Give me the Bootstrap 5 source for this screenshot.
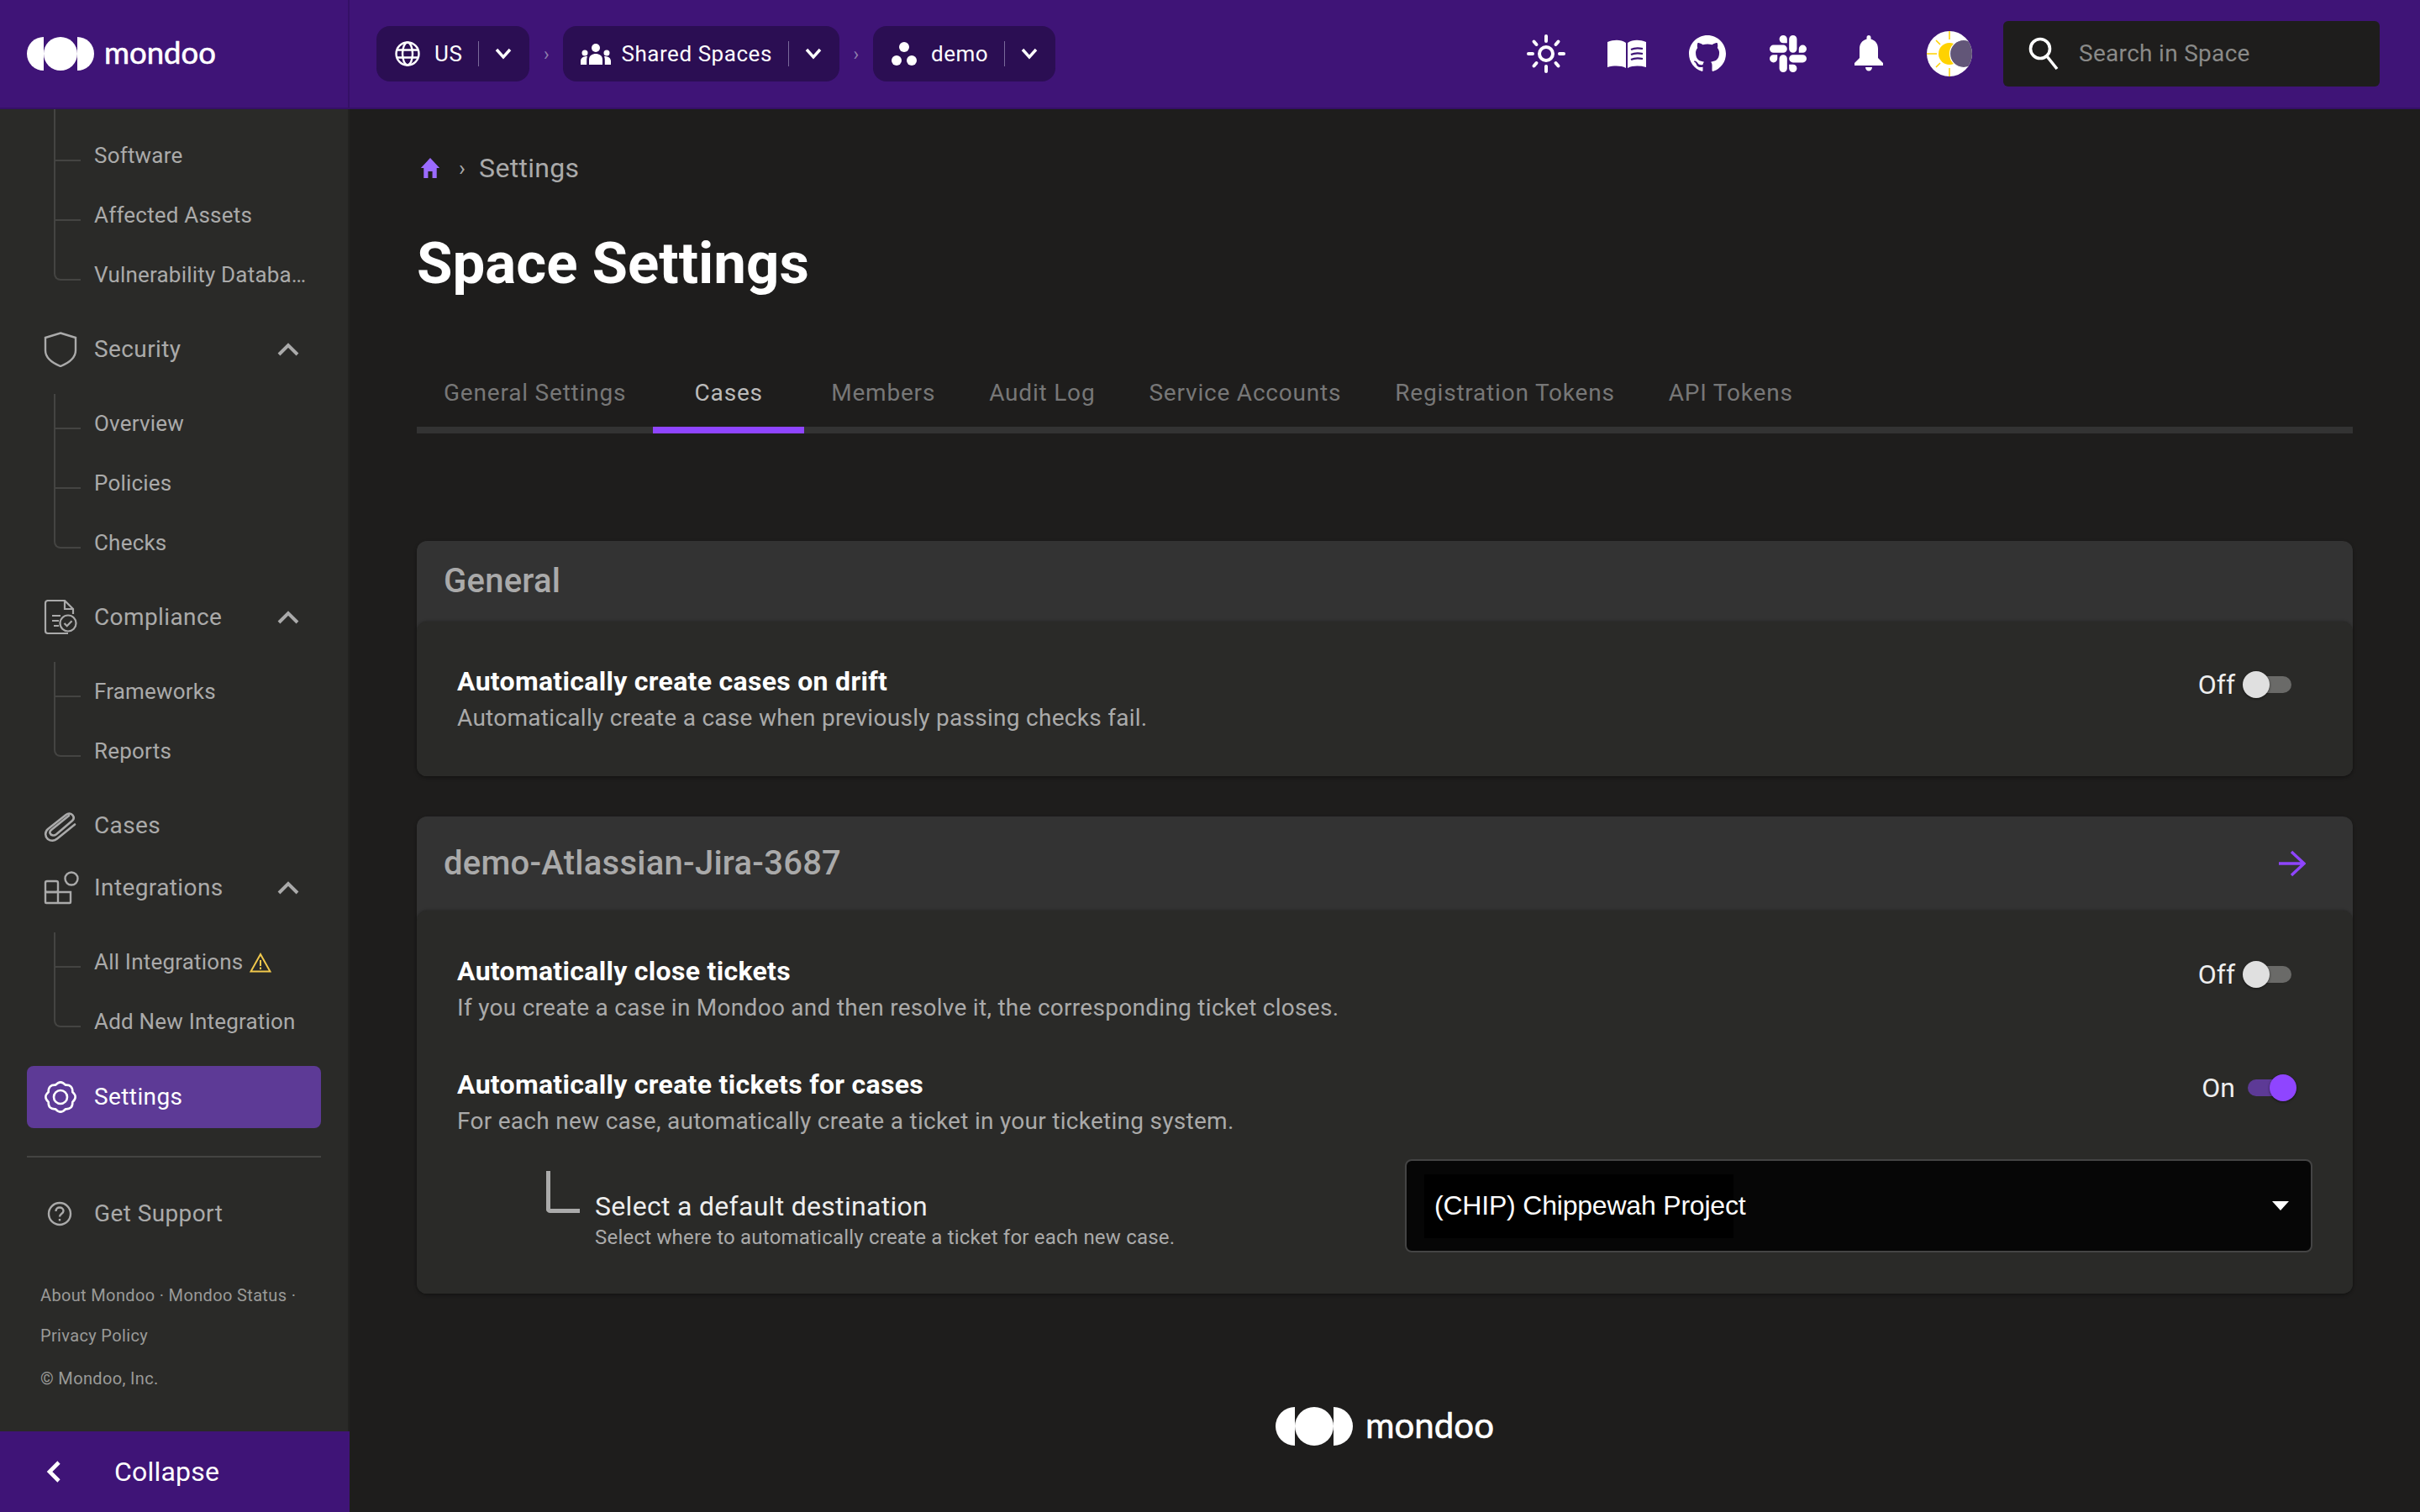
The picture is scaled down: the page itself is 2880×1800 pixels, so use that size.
<!DOCTYPE html>
<html lang="en">
<head>
  <meta charset="UTF-8" />
  <title>Space Settings</title>
  <link href="https://cdn.jsdelivr.net/npm/bootstrap@5.3.0/dist/css/bootstrap.min.css" rel="stylesheet" />
  <style>
    html, body { height: 100%; }
    body {
      background: #1e1d1c;
      color: #fff;
      font-family: Roboto, "Liberation Sans", sans-serif;
      overflow: hidden;
    }
    svg { display: block; flex: none; }

    /* top bar */
    .topbar { height: 130px; background: #3f1477; border-bottom: 2px solid #351066; }
    .logo-cell { width: 416px; border-right: 2px solid #351066; padding-left: 32px; }
    .wordmark { font-family: Lato, Roboto, sans-serif; font-weight: 400; line-height: 1; -webkit-text-stroke: .6px #fff; }
    .logo-cell .wordmark { font-size: 36.5px; margin-left: 12px; margin-top: -4px; }
    .crumbs { padding-left: 32px; }
    .pill { height: 66px; background: #2b0e53; border-radius: 16px; padding: 0 21px; font-size: 26px; letter-spacing: .55px; }
    .pill-sep { width: 1px; height: 30px; background: #7a6a9a; margin: 0 19px; }
    .pill-label-tight { margin-left: 12px; }
    .crumb-arrow { width: 40px; text-align: center; color: #8f7fae; font-size: 22px; }
    .tool-cell { width: 96px; }
    .search-box { width: 448px; height: 78px; margin: 0 48px 0 16px; background: #1e1d1c; border-radius: 6px; padding-left: 30px; color: #8a8a88; font-size: 28px; letter-spacing: .3px; }
    .search-text { margin-left: 24px; }

    /* sidebar */
    .sidebar { width: 416px; height: 1670px; overflow: hidden; }
    .side-scroll { background: #2a2a28; border-right: 2px solid #222220; padding: 20px 32px 0 32px; overflow: hidden; }
    .side-row { height: 74px; color: #aaa; font-size: 28px; letter-spacing: .4px; margin-left: 20px; }
    .ico-slot { width: 60px; flex: none; }
    .side-row .chev { margin-left: auto; margin-right: 26px; }
    .sub-list { list-style: none; margin: 16px 0 16px; padding: 0; }
    .sub-list li { height: 71px; display: flex; align-items: center; padding-left: 80px; color: #aaa; font-size: 26px; letter-spacing: .2px; white-space: nowrap; position: relative; }
    .sub-list li::before { content: ""; position: absolute; left: 32px; top: 0; height: 100%; width: 2px; background: #444442; }
    .sub-list li::after { content: ""; position: absolute; left: 32px; top: 40px; width: 32px; height: 2px; background: #444442; }
    .sub-list li:last-child::before { height: 33px; }
    .sub-list li:last-child::after { top: 32px; height: 10px; background: none; border-left: 2px solid #444442; border-bottom: 2px solid #444442; border-bottom-left-radius: 8px; }
    .sub-list.first { margin-top: 0; }
    .sub-list.first li:first-child::before { top: -20px; height: calc(100% + 20px); }
    .side-active { height: 74px; margin-top: 17px; background: #5d3a96; color: #fff; border-radius: 8px; padding-left: 20px; font-size: 28px; letter-spacing: .4px; }
    .side-rule { height: 2px; background: #444442; margin: 33px 0 39px; }
    .support-row { height: 56px; }
    .side-foot { padding-left: 16px; color: #9a9a98; font-size: 20px; letter-spacing: .35px; white-space: nowrap; }
    .foot-about { margin-top: 54px; }
    .foot-privacy { margin-top: 18px; }
    .foot-copy { margin-top: 21px; }
    .collapse-bar { height: 96px; background: #3f1477; padding-left: 55px; color: #fff; font-size: 32px; letter-spacing: .2px; }
    .collapse-text { margin-left: 63px; }

    /* main */
    .main-area { padding: 0 80px; min-width: 0; }
    .crumb-line { height: 40px; margin-top: 50px; color: #aaa; font-size: 32px; letter-spacing: .3px; }
    .home-ico { margin-left: 4px; }
    .crumb-sep { font-size: 26px; margin: 0 16px 0 22px; }
    .page-title { font-size: 69px; font-weight: 700; margin: 59px 0 0; line-height: 1; }
    .tabs-bar { margin-top: 82px; border-bottom: 8px solid #333; height: 86px; }
    .tab-item { min-width: 180px; padding: 0 32px 10px; height: 86px; color: #777; font-size: 28px; letter-spacing: .8px; display: flex; align-items: center; justify-content: center; white-space: nowrap; position: relative; }
    .tab-item.on { color: #bbb; }
    .tab-item.on::after { content: ""; position: absolute; left: 0; right: 0; bottom: 0; height: 8px; background: #8f45ff; }

    .set-card { background: #333; border-radius: 12px; margin-bottom: 48px; box-shadow: 0 2px 4px rgba(0,0,0,.3); }
    .card-general { margin-top: 128px; }
    .set-head { color: #aaa; font-size: 40px; font-weight: 500; padding: 0 32px; letter-spacing: .25px; }
    .head-small { height: 96px; }
    .head-large { height: 112px; }
    .head-arrow { margin-right: 24px; }
    .set-body { background: #2a2a28; border-radius: 12px; padding: 0 48px; box-shadow: 0 -1px 3px rgba(0,0,0,.2); }
    .body-general { padding-top: 49px; padding-bottom: 47px; }
    .body-jira { padding-top: 50px; padding-bottom: 49px; }
    .set-row { display: flex; justify-content: space-between; }
    .row-next { margin-top: 47px; }
    .row-title { font-size: 32px; font-weight: 700; line-height: 44px; letter-spacing: .3px; }
    .row-desc { font-size: 28px; line-height: 44px; color: #aaa; letter-spacing: .28px; }

    /* toggles */
    .tog { width: 130px; height: 32px; margin: 10px 22px 0 0; }
    .tog-lab { font-size: 32px; line-height: 32px; color: #eee; width: 60px; text-align: right; }
    .tog-track { position: relative; width: 52px; height: 20px; border-radius: 10px; background: #6a6a68; margin-left: 15px; }
    .tog-track i { position: absolute; top: -6px; left: -6px; width: 32px; height: 32px; border-radius: 50%; background: #e0e0e0; box-shadow: 0 1px 3px rgba(0,0,0,.5); }
    .tog-track.on { background: #5d3a96; }
    .tog-track.on i { left: 26px; background: #8f45ff; }

    .dest-row { margin-top: 23px; }
    .dest-left { padding-left: 106px; }
    .dest-elbow { margin-top: 14px; }
    .dest-copy { margin: 34px 0 0 18px; }
    .dest-title { font-size: 32px; color: #eee; line-height: 44px; letter-spacing: .3px; }
    .dest-sub { font-size: 24px; color: #aaa; line-height: 30px; letter-spacing: .21px; }
    .dest-select { width: 1080px; height: 111px; background: #060606; border: 2px solid #444; border-radius: 8px; padding-left: 21px; font-family: "Liberation Sans", Arial, sans-serif; font-size: 32px; letter-spacing: -.2px; color: #fff; }
    .dest-select span { padding: 13px 0 15px 12px; background: linear-gradient(#000, #000) no-repeat 0 0 / 368px 100%; }
    .caret-down { width: 0; height: 0; border-left: 10px solid transparent; border-right: 10px solid transparent; border-top: 11px solid #fff; margin-left: auto; margin-right: 26px; }
    .foot-logo { margin-top: 135px; }
    .foot-logo .wordmark { font-size: 42px; margin-left: 15px; margin-top: -5px; }
  </style>
</head>
<body>

  <!-- top bar -->
  <div class="topbar d-flex align-items-center">
    <div class="logo-cell d-flex align-items-center h-100">
      <svg width="80" height="40" viewBox="0 0 80 40"><g fill="#fff"><path d="M20 0v40a20 20 0 0 1 0-40z"/><circle cx="40" cy="20" r="20"/><path d="M60 0a20 20 0 0 1 0 40z"/></g></svg>
      <span class="wordmark">mondoo</span>
    </div>
    <div class="crumbs d-flex align-items-center flex-grow-1">
      <div class="pill d-flex align-items-center">
        <svg width="32" height="32" viewBox="0 0 32 32" fill="none" stroke="#fff" stroke-width="2.4"><circle cx="16" cy="16" r="13.5"/><ellipse cx="16" cy="16" rx="6" ry="13.5"/><path d="M3 11.500h26M3 20.500h26"/></svg>
        <span class="ms-3">US</span>
        <span class="pill-sep"></span>
        <svg width="20" height="14" viewBox="0 0 20 14" fill="none" stroke="#fff" stroke-width="3.4"><path d="M2 2l8 9 8-9"/></svg>
      </div>
      <div class="crumb-arrow">›</div>
      <div class="pill d-flex align-items-center">
        <svg width="36" height="26" viewBox="0 0 36 26" fill="#fff"><circle cx="18" cy="6" r="5"/><path d="M10 26v-6c0-5 4-7 8-7s8 2 8 7v6z"/><circle cx="5" cy="12" r="3.5"/><path d="M0 26v-4c0-4 3-6 8-6-.5 1.300-.8 2.800-.8 4.500V26z"/><circle cx="31" cy="12" r="3.5"/><path d="M36 26v-4c0-4-3-6-8-6 .5 1.300.8 2.800.8 4.500V26z"/></svg>
        <span class="pill-label-tight">Shared Spaces</span>
        <span class="pill-sep"></span>
        <svg width="20" height="14" viewBox="0 0 20 14" fill="none" stroke="#fff" stroke-width="3.4"><path d="M2 2l8 9 8-9"/></svg>
      </div>
      <div class="crumb-arrow">›</div>
      <div class="pill d-flex align-items-center">
        <svg width="32" height="30" viewBox="0 0 32 30" fill="#fff"><circle cx="16" cy="7" r="6"/><circle cx="7" cy="23" r="6"/><circle cx="25" cy="23" r="6"/></svg>
        <span class="ms-3">demo</span>
        <span class="pill-sep"></span>
        <svg width="20" height="14" viewBox="0 0 20 14" fill="none" stroke="#fff" stroke-width="3.4"><path d="M2 2l8 9 8-9"/></svg>
      </div>
    </div>
    <div class="d-flex align-items-center">
      <div class="tool-cell d-flex justify-content-center">
        <svg width="46" height="46" viewBox="0 0 46 46" fill="none" stroke="#fff" stroke-width="4" stroke-linecap="round"><circle cx="23" cy="23" r="8"/><path d="M23 2v6M23 38v6M2 23h5M39 23h5M8.500 8.500l3 3.500M37.500 8.500l-3 3.500M8.500 37.500l3-3.500M37.500 37.500l-3-3.500"/></svg>
      </div>
      <div class="tool-cell d-flex justify-content-center">
        <svg width="46" height="34" viewBox="0 0 46 34" fill="#fff"><path d="M0 3c8-3 16-3 22 1v30c-6-3-14-3-22-1z"/><path d="M24 4c6-4 14-4 22-1v30c-8-2-16-2-22 1z"/><path d="M28 12c4-2 9-2 14-1M28 18c4-2 9-2 14-1M28 24c4-2 9-2 14-1" stroke="#3f1477" stroke-width="2.200" fill="none"/></svg>
      </div>
      <div class="tool-cell d-flex justify-content-center">
        <svg width="44" height="44" viewBox="0 0 16 16" fill="#fff"><path d="M8 0C3.580 0 0 3.580 0 8c0 3.540 2.290 6.530 5.470 7.590.4.070.55-.17.55-.38 0-.19-.01-.82-.01-1.490-2.010.37-2.530-.49-2.690-.94-.09-.23-.48-.94-.82-1.130-.28-.15-.68-.52-.01-.53.630-.01 1.080.58 1.230.82.720 1.210 1.870.87 2.330.66.070-.52.280-.87.510-1.070-1.780-.2-3.640-.89-3.640-3.950 0-.87.310-1.590.820-2.150-.08-.2-.36-1.020.08-2.120 0 0 .67-.21 2.200.82.640-.18 1.320-.27 2-.27s1.360.09 2 .27c1.530-1.040 2.200-.82 2.200-.82.440 1.100.16 1.920.08 2.120.51.560.820 1.270.820 2.150 0 3.070-1.870 3.750-3.650 3.950.290.250.540.730.540 1.480 0 1.070-.01 1.930-.01 2.200 0 .21.150.46.550.38A8.010 8.010 0 0 0 16 8c0-4.420-3.580-8-8-8z"/></svg>
      </div>
      <div class="tool-cell d-flex justify-content-center">
        <svg width="44" height="44" viewBox="0 0 24 24" fill="#fff"><path d="M5.042 15.165a2.528 2.528 0 0 1-2.520 2.523A2.528 2.528 0 0 1 0 15.165a2.527 2.527 0 0 1 2.522-2.520h2.520v2.520zM6.313 15.165a2.527 2.527 0 0 1 2.521-2.520 2.527 2.527 0 0 1 2.521 2.520v6.313A2.528 2.528 0 0 1 8.834 24a2.528 2.528 0 0 1-2.521-2.522v-6.313zM8.834 5.042a2.528 2.528 0 0 1-2.521-2.520A2.528 2.528 0 0 1 8.834 0a2.528 2.528 0 0 1 2.521 2.522v2.520H8.834zM8.834 6.313a2.528 2.528 0 0 1 2.521 2.521 2.528 2.528 0 0 1-2.521 2.521H2.522A2.528 2.528 0 0 1 0 8.834a2.528 2.528 0 0 1 2.522-2.521h6.312zM18.956 8.834a2.528 2.528 0 0 1 2.522-2.521A2.528 2.528 0 0 1 24 8.834a2.528 2.528 0 0 1-2.522 2.521h-2.522V8.834zM17.688 8.834a2.528 2.528 0 0 1-2.523 2.521 2.527 2.527 0 0 1-2.520-2.521V2.522A2.527 2.527 0 0 1 15.165 0a2.528 2.528 0 0 1 2.523 2.522v6.312zM15.165 18.956a2.528 2.528 0 0 1 2.523 2.522A2.528 2.528 0 0 1 15.165 24a2.527 2.527 0 0 1-2.520-2.522v-2.522h2.520zM15.165 17.688a2.527 2.527 0 0 1-2.520-2.523 2.526 2.526 0 0 1 2.520-2.520h6.313A2.527 2.527 0 0 1 24 15.165a2.528 2.528 0 0 1-2.522 2.523h-6.313z"/></svg>
      </div>
      <div class="tool-cell d-flex justify-content-center">
        <svg width="34" height="44" viewBox="0 0 34 44" fill="#fff"><path d="M17 0c-1.500 0-2.500 1-2.500 2.500v2C9 6 6 10.500 6 16v11L0 33v3h34v-3l-6-6V16c0-5.500-3-10-8.500-11.500v-2C19.500 1 18.500 0 17 0z"/><path d="M13 38h8c0 2.500-1.800 4.500-4 4.500S13 40.500 13 38z"/></svg>
      </div>
      <div class="tool-cell d-flex justify-content-center">
        <svg width="54" height="54" viewBox="0 0 54 54">
          <clipPath id="modeDisc"><circle cx="27" cy="27" r="27"/></clipPath>
          <circle cx="27" cy="27" r="27" fill="#fff"/>
          <path d="M27 0v10M27 44v10M0 27h12M11 11l5 5M11 43l5-5" stroke="#ffd200" stroke-width="1.500"/>
          <circle cx="27" cy="27" r="13" fill="#ffd200"/>
          <circle cx="44" cy="27" r="16.500" fill="#625678" stroke="#fff" stroke-width="1.200" clip-path="url(#modeDisc)"/>
        </svg>
      </div>
      <div class="search-box d-flex align-items-center">
        <svg width="36" height="40" viewBox="0 0 36 40" fill="none" stroke="#fff" stroke-width="3.600"><circle cx="14" cy="14" r="11.500"/><path d="M22 23l12 15"/></svg>
        <span class="search-text">Search in Space</span>
      </div>
    </div>
  </div>

  <div class="d-flex">
    <!-- sidebar -->
    <aside class="sidebar d-flex flex-column flex-shrink-0">
      <div class="side-scroll flex-grow-1">
        <ul class="sub-list first">
          <li>Software</li>
          <li>Affected Assets</li>
          <li>Vulnerability Databa…</li>
        </ul>
        <div class="side-row d-flex align-items-center">
          <span class="ico-slot"><svg width="40" height="42" viewBox="0 0 40 42" fill="none" stroke="#aaa" stroke-width="2.400"><path d="M20 1.500L38 7v15c0 9-8 15-18 19C10 37 2 31 2 22V7z"/></svg></span>
          <span>Security</span>
          <svg class="chev" width="26" height="16" viewBox="0 0 26 16" fill="none" stroke="#aaa" stroke-width="4"><path d="M2 14L13 3l11 11"/></svg>
        </div>
        <ul class="sub-list">
          <li>Overview</li>
          <li>Policies</li>
          <li>Checks</li>
        </ul>
        <div class="side-row d-flex align-items-center">
          <span class="ico-slot"><svg width="40" height="42" viewBox="0 0 40 42" fill="none" stroke="#aaa" stroke-width="2.200"><path d="M29 40H5a3 3 0 0 1-3-3V4a3 3 0 0 1 3-3h20l10 10v6M25 1v10h10"/><path d="M10 19h10M10 25h8M12 31h6"/><circle cx="29" cy="28" r="9.500"/><path d="M24.500 28l3.200 3.200 5.800-6"/></svg></span>
          <span>Compliance</span>
          <svg class="chev" width="26" height="16" viewBox="0 0 26 16" fill="none" stroke="#aaa" stroke-width="4"><path d="M2 14L13 3l11 11"/></svg>
        </div>
        <ul class="sub-list">
          <li>Frameworks</li>
          <li>Reports</li>
        </ul>
        <div class="side-row d-flex align-items-center">
          <span class="ico-slot"><svg width="42" height="38" viewBox="0 0 42 38" fill="none" stroke="#aaa" stroke-width="2.600" stroke-linecap="round"><path d="M30 7L9 24c-3 2.500-1.500 6 2 6.500 1.500.2 3-.5 4-1.300L34 13c2-1.800 2-4.500.5-6.500-2-2.500-5.500-2.500-8-.5L5 23c-4 3.500-3.500 9 0 12 3.500 2.500 8 2 11-.5l21-17"/></svg></span>
          <span>Cases</span>
        </div>
        <div class="side-row d-flex align-items-center">
          <span class="ico-slot"><svg width="42" height="40" viewBox="0 0 42 40" fill="none" stroke="#aaa" stroke-width="2.400"><rect x="2" y="12" width="15" height="13" rx="2"/><path d="M2 25h30v12a1 1 0 0 1-1 1H3a1 1 0 0 1-1-1zM17 25v13"/><circle cx="33" cy="9" r="7.500"/></svg></span>
          <span>Integrations</span>
          <svg class="chev" width="26" height="16" viewBox="0 0 26 16" fill="none" stroke="#aaa" stroke-width="4"><path d="M2 14L13 3l11 11"/></svg>
        </div>
        <ul class="sub-list">
          <li>All Integrations
            <svg class="ms-2" width="26" height="24" viewBox="0 0 26 24" fill="none" stroke="#f2c94c" stroke-width="2"><path d="M13 2L1.500 22.500h23z"/><path d="M13 9v7M13 17.500v2.500"/></svg>
          </li>
          <li>Add New Integration</li>
        </ul>
        <div class="side-active d-flex align-items-center">
          <span class="ico-slot"><svg width="40" height="40" viewBox="0 0 40 40" fill="none" stroke="#fff" stroke-width="2.600" stroke-linejoin="round"><path d="M14.100 5.700Q20-1 25.900 5.700Q34.800 5.200 34.300 14.100Q41 20 34.300 25.900Q34.800 34.800 25.900 34.300Q20 41 14.100 34.300Q5.200 34.800 5.700 25.900Q-1 20 5.700 14.100Q5.200 5.200 14.100 5.700z"/><circle cx="20" cy="20" r="8"/></svg></span>
          <span>Settings</span>
        </div>
        <div class="side-rule"></div>
        <div class="side-row support-row d-flex align-items-center">
          <span class="ico-slot"><svg class="ms-1" width="30" height="30" viewBox="0 0 30 30" fill="none" stroke="#aaa" stroke-width="2.400"><circle cx="15" cy="15" r="13"/><path d="M10.500 12c0-3 2-4.500 4.500-4.500s4.500 1.500 4.500 4c0 3.500-4.500 3.500-4.500 7M15 21v2.500"/></svg></span>
          <span>Get Support</span>
        </div>
        <div class="side-foot">
          <div class="foot-about">About Mondoo · Mondoo Status ·</div>
          <div class="foot-privacy">Privacy Policy</div>
          <div class="foot-copy">© Mondoo, Inc.</div>
        </div>
      </div>
      <div class="collapse-bar d-flex align-items-center flex-shrink-0">
        <svg width="18" height="26" viewBox="0 0 18 26" fill="none" stroke="#fff" stroke-width="4.600"><path d="M15 2L4 13l11 11"/></svg>
        <span class="collapse-text">Collapse</span>
      </div>
    </aside>

    <!-- main -->
    <main class="main-area flex-grow-1">
      <div class="crumb-line d-flex align-items-center">
        <svg class="home-ico" width="24" height="24" viewBox="0 0 28 24" fill="#9b6bff" preserveAspectRatio="none"><path d="M14 0L27 12h-4v12h-6v-8h-6v8H5V12H1z"/></svg>
        <span class="crumb-sep">›</span>
        <span>Settings</span>
      </div>
      <h1 class="page-title">Space Settings</h1>

      <div class="tabs-bar d-flex">
        <div class="tab-item">General Settings</div>
        <div class="tab-item on">Cases</div>
        <div class="tab-item">Members</div>
        <div class="tab-item">Audit Log</div>
        <div class="tab-item">Service Accounts</div>
        <div class="tab-item">Registration Tokens</div>
        <div class="tab-item">API Tokens</div>
      </div>

      <section class="set-card card-general">
        <div class="set-head head-small d-flex align-items-center">General</div>
        <div class="set-body body-general">
          <div class="set-row">
            <div>
              <div class="row-title">Automatically create cases on drift</div>
              <div class="row-desc">Automatically create a case when previously passing checks fail.</div>
            </div>
            <div class="tog d-flex align-items-center">
              <span class="tog-lab">Off</span>
              <span class="tog-track"><i></i></span>
            </div>
          </div>
        </div>
      </section>

      <section class="set-card">
        <div class="set-head head-large d-flex align-items-center justify-content-between">
          <span>demo-Atlassian-Jira-3687</span>
          <svg class="head-arrow" width="32" height="32" viewBox="0 0 32 32" fill="none" stroke="#8f45ff" stroke-width="3.400"><path d="M0 16h30M15 2l15 14-15 14"/></svg>
        </div>
        <div class="set-body body-jira">
          <div class="set-row">
            <div>
              <div class="row-title">Automatically close tickets</div>
              <div class="row-desc">If you create a case in Mondoo and then resolve it, the corresponding ticket closes.</div>
            </div>
            <div class="tog d-flex align-items-center">
              <span class="tog-lab">Off</span>
              <span class="tog-track"><i></i></span>
            </div>
          </div>
          <div class="set-row row-next">
            <div>
              <div class="row-title">Automatically create tickets for cases</div>
              <div class="row-desc">For each new case, automatically create a ticket in your ticketing system.</div>
            </div>
            <div class="tog d-flex align-items-center">
              <span class="tog-lab">On</span>
              <span class="tog-track on"><i></i></span>
            </div>
          </div>
          <div class="dest-row d-flex justify-content-between">
            <div class="dest-left d-flex">
              <svg class="dest-elbow" width="40" height="50" viewBox="0 0 40 50" fill="none" stroke="#aaa" stroke-width="5"><path d="M2.500 0v45a2 2 0 0 0 2 2.500h35.500"/></svg>
              <div class="dest-copy">
                <div class="dest-title">Select a default destination</div>
                <div class="dest-sub">Select where to automatically create a ticket for each new case.</div>
              </div>
            </div>
            <div class="dest-select d-flex align-items-center">
              <span>(CHIP) Chippewah Project</span>
              <i class="caret-down"></i>
            </div>
          </div>
        </div>
      </section>

      <div class="foot-logo d-flex align-items-center justify-content-center">
        <svg width="92" height="46" viewBox="0 0 80 40"><g fill="#fff"><path d="M20 0v40a20 20 0 0 1 0-40z"/><circle cx="40" cy="20" r="20"/><path d="M60 0a20 20 0 0 1 0 40z"/></g></svg>
        <span class="wordmark">mondoo</span>
      </div>
    </main>
  </div>

  <script src="https://cdn.jsdelivr.net/npm/bootstrap@5.3.0/dist/js/bootstrap.bundle.min.js"></script>
</body>
</html>
